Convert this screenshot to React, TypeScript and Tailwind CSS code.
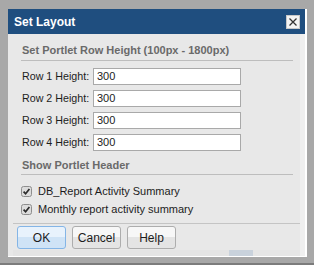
const rows = ["Row 1 Height:", "Row 2 Height:", "Row 3 Height:", "Row 4 Height:"];
const portlets = ["DB_Report Activity Summary", "Monthly report activity summary"];

function Check() {
  return (
    <svg width="11" height="11" viewBox="0 0 11 11" className="shrink-0">
      <rect x="0.5" y="0.5" width="10" height="10" rx="2" fill="#dcdcdc" stroke="#8e8e8e" />
      <path d="M2.6 5.6 L4.6 7.8 L8.4 2.9" fill="none" stroke="#2b2b2b" strokeWidth="1.7" />
    </svg>
  );
}

function Btn({ label, primary }: { label: string; primary?: boolean }) {
  return (
    <button
      className={
        primary
          ? "w-[49px] h-[23px] rounded-[3px] border border-[#84b5e6] bg-gradient-to-b from-[#e8f2fc] from-50% to-[#cfe3f6] to-50% text-[12px] text-[#1c1c1c]"
          : "w-[49px] h-[23px] rounded-[3px] border border-[#adadad] bg-gradient-to-b from-[#f7f7f7] from-50% to-[#e4e4e4] to-50% text-[12px] text-[#1c1c1c]"
      }
    >
      {label}
    </button>
  );
}

export default function App() {
  return (
    <div className="w-[314px] h-[265px] bg-[#a8a8a8] pl-[8px] pt-[9px] pr-[7px] pb-[6px] border-b-2 border-[#7c7c7c] flex font-['Liberation_Sans',Arial,sans-serif]">
      <div className="flex-1 flex flex-col bg-[#e8e8e8] border-r-2 border-b border-white">
        <div className="h-[25px] shrink-0 bg-[#1f4e7f] flex items-center justify-between pl-[6px] pr-[5px]">
          <span className="text-white text-[12px] font-bold">Set Layout</span>
          <div className="w-[14px] h-[14px] bg-[#f4f4f4] border border-[#c8c8c8] flex items-center justify-center">
            <svg width="10" height="10" viewBox="0 0 10 10">
              <path d="M1.5 1.5 L8.5 8.5 M8.5 1.5 L1.5 8.5" stroke="#333" strokeWidth="1.3" />
            </svg>
          </div>
        </div>

        <div className="flex flex-1">
          <div className="flex-1 flex flex-col">
            <div className="pl-[13px] pr-[7px] pt-[10px] flex flex-col">
              <div className="text-[11px] leading-[13px] font-bold text-[#6a6a6a] pl-[1px]">
                Set Portlet Row Height (100px - 1800px)
              </div>
              <div className="mt-[3px] border-t border-[#bdbdbd]" />
              <div className="mt-[7px] flex flex-col gap-[5px]">
                {rows.map((r) => (
                  <div key={r} className="flex items-center h-[17px]">
                    <span className="w-[72px] pl-[1px] text-[10.7px] text-[#1c1c1c]">{r}</span>
                    <div className="w-[148px] h-[17px] bg-white border border-[#a9a9a9] text-[11px] leading-[15px] pl-[3px] text-[#1c1c1c]">
                      300
                    </div>
                  </div>
                ))}
              </div>
              <div className="mt-[8px] text-[11px] leading-[13px] font-bold text-[#6a6a6a] pl-[1px]">
                Show Portlet Header
              </div>
              <div className="mt-[2px] border-t border-[#bdbdbd]" />
              <div className="mt-[10px] flex flex-col gap-[5px]">
                {portlets.map((p) => (
                  <div key={p} className="flex items-center gap-[6px] h-[13px]">
                    <Check />
                    <span className="text-[11px] leading-[13px] text-[#1c1c1c]">{p}</span>
                  </div>
                ))}
              </div>
            </div>
            <div className="mt-[7px] ml-[5px] border-t border-[#c4c4c4]" />
            <div className="mt-[2px] pl-[9px] flex gap-[6px]">
              <Btn label="OK" primary />
              <Btn label="Cancel" />
              <Btn label="Help" />
            </div>
            <div className="flex-1 flex mt-[1px] ml-[5px]">
              <div className="w-[216px] bg-[#e4e4e4]" />
              <div className="w-[24px] bg-[#c9d2dc]" />
              <div className="flex-1 bg-[#e6e6e6]" />
            </div>
          </div>
          <div className="w-[5px] bg-[#efefef]" />
        </div>
      </div>
    </div>
  );
}
